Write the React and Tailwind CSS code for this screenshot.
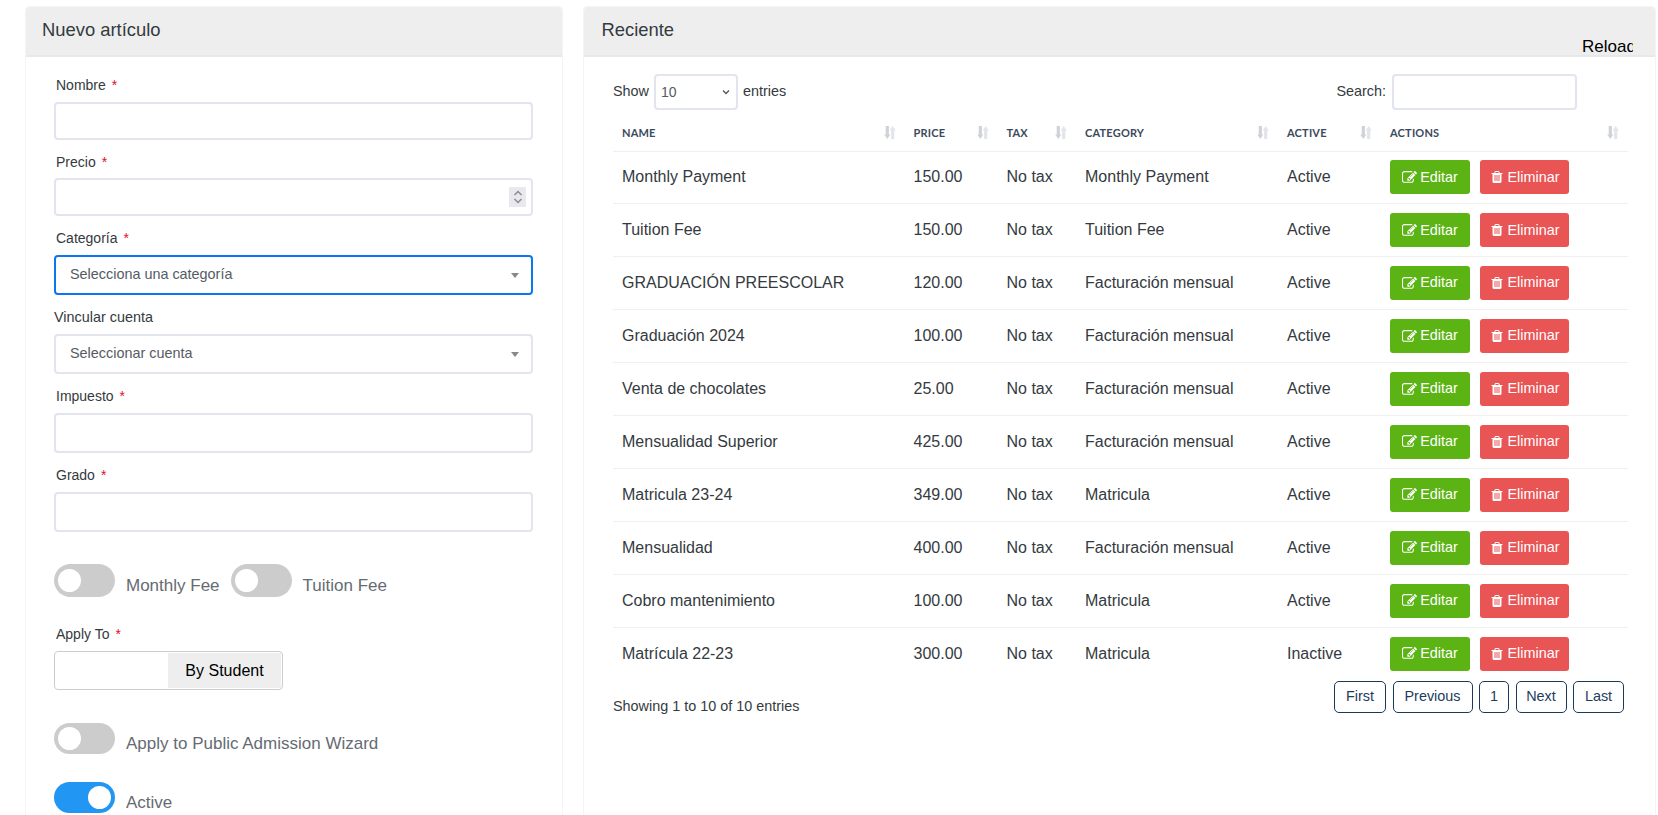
import React from "react";

const rows = [
  ["Monthly Payment", "150.00", "No tax", "Monthly Payment", "Active"],
  ["Tuition Fee", "150.00", "No tax", "Tuition Fee", "Active"],
  ["GRADUACIÓN PREESCOLAR", "120.00", "No tax", "Facturación mensual", "Active"],
  ["Graduación 2024", "100.00", "No tax", "Facturación mensual", "Active"],
  ["Venta de chocolates", "25.00", "No tax", "Facturación mensual", "Active"],
  ["Mensualidad Superior", "425.00", "No tax", "Facturación mensual", "Active"],
  ["Matricula 23-24", "349.00", "No tax", "Matricula", "Active"],
  ["Mensualidad", "400.00", "No tax", "Facturación mensual", "Active"],
  ["Cobro mantenimiento", "100.00", "No tax", "Matricula", "Active"],
  ["Matrícula 22-23", "300.00", "No tax", "Matricula", "Inactive"],
];

const headers = [
  ["NAME", "w-[291.5px]"],
  ["PRICE", "w-[93px]"],
  ["TAX", "w-[78.5px]"],
  ["CATEGORY", "w-[202px]"],
  ["ACTIVE", "w-[103px]"],
  ["ACTIONS", ""],
];

function EditIcon() {
  return (
    <svg width="15" height="15" viewBox="0 0 1792 1792" fill="currentColor" className="shrink-0">
      <path d="M888 1184l116-116-152-152-116 116v56h96v96h56zm440-720q-16-16-33 1l-350 350q-17 17-1 33t33-1l350-350q17-17 1-33zm80 594v190q0 119-84.5 203.5t-203.5 84.5h-832q-119 0-203.5-84.5t-84.5-203.5v-832q0-119 84.5-203.5t203.5-84.5h832q63 0 117 25 15 7 18 23 3 17-9 29l-49 49q-14 14-32 8-23-6-45-6h-832q-66 0-113 47t-47 113v832q0 66 47 113t113 47h832q66 0 113-47t47-113v-126q0-13 9-22l64-64q15-15 35-7t20 29zm-96-738l288 288-672 672h-288v-288zm444 132l-92 92-288-288 92-92q28-28 68-28t68 28l152 152q28 28 28 68t-28 68z" />
    </svg>
  );
}

function TrashIcon() {
  return (
    <svg width="14" height="14" viewBox="0 0 1792 1792" fill="currentColor" className="shrink-0">
      <path d="M704 1376v-704q0-14-9-23t-23-9h-64q-14 0-23 9t-9 23v704q0 14 9 23t23 9h64q14 0 23-9t9-23zm256 0v-704q0-14-9-23t-23-9h-64q-14 0-23 9t-9 23v704q0 14 9 23t23 9h64q14 0 23-9t9-23zm256 0v-704q0-14-9-23t-23-9h-64q-14 0-23 9t-9 23v704q0 14 9 23t23 9h64q14 0 23-9t9-23zm-544-992h448l-48-117q-7-9-17-11h-317q-10 2-17 11zm928 32v64q0 14-9 23t-23 9h-96v948q0 83-47 143.5t-113 60.5h-832q-66 0-113-58.5t-47-141.5v-952h-96q-14 0-23-9t-9-23v-64q0-14 9-23t23-9h309l70-167q15-37 54-63t79-26h320q40 0 79 26t54 63l70 167h309q14 0 23 9t9 23z" />
    </svg>
  );
}

function Label({ text, req = true, className = "ml-[2px] text-[14px]" }) {
  return (
    <label className={`block h-5 leading-5 text-[#343a40] ${className}`}>
      {text}
      {req && <span className="ml-[6px] text-[#e0102b]">*</span>}
    </label>
  );
}

function Input({ className = "", children }) {
  return (
    <div className={`relative w-full rounded-[4px] border-2 border-[#e2e5f0] bg-white ${className}`}>{children}</div>
  );
}

function Select2({ text }) {
  return (
    <div className="flex h-full items-center justify-between rounded-[4px] pl-[14px] pr-[12px] text-[14.4px] text-[#555b63]">
      <span>{text}</span>
      <span className="h-0 w-0 border-x-[4px] border-t-[5px] border-x-transparent border-t-[#888888]" />
    </div>
  );
}

function Toggle({ on, h = "h-[32px]" }) {
  return (
    <span className={`flex w-[61px] shrink-0 items-center rounded-full px-[4px] ${h} ${on ? "justify-end bg-[#2196f3]" : "bg-[#cccccc]"}`}>
      <span className="h-[23px] w-[23px] rounded-full bg-white" />
    </span>
  );
}

function SortIcon() {
  return (
    <svg width="12" height="13" viewBox="0 0 12 13" className="shrink-0">
      <path d="M1.7 0h3.2v8.5h1.5L3.3 13 .2 8.5h1.5z" fill="#cfd3d8" />
      <path d="M7.1 13h3.2V4.5h1.5L8.7 0 5.6 4.5h1.5z" fill="#e2e5e9" />
    </svg>
  );
}

function PageBtn({ children, className = "" }) {
  return (
    <span className={`flex h-8 items-center justify-center rounded-[5px] border border-[#1b3a57] text-[14.4px] text-[#1c3c5c] ${className}`}>
      {children}
    </span>
  );
}

export default function App() {
  return (
    <div
      className="flex h-[815px] items-start gap-[20px] overflow-hidden bg-white pl-[25px] pt-[6px]"
      style={{ fontFamily: '"Liberation Sans", Arial, sans-serif' }}
    >
      {/* Left card */}
      <div className="h-[900px] w-[538px] shrink-0 rounded-t-[4px] border border-[#f4f4f4] bg-white">
        <div className="flex h-[50px] items-center rounded-t-[4px] border-b-2 border-[#e8e8e8] bg-[#eeeeee] pb-[2px] pl-[16px] text-[18.4px] text-[#343a40]">
          Nuevo artículo
        </div>
        <form className="pl-[28px] pr-[29px] pt-[18px]">
          <Label text="Nombre" />
          <Input className="mt-[7px] h-[38px]" />
          <Label text="Precio" className="ml-[2px] mt-[12px] text-[14px]" />
          <Input className="mt-[6px] h-[38px]">
            <span className="absolute right-[5px] top-[7px] flex h-[20px] w-[17px] flex-col items-center justify-center bg-[#e8e8ee]">
              <svg width="10" height="16" viewBox="0 0 10 16" fill="none" stroke="#8a8d91" strokeWidth="1.5">
                <path d="M1.5 6 5 2.5 8.5 6" />
                <path d="M1.5 10 5 13.5 8.5 10" />
              </svg>
            </span>
          </Input>
          <Label text="Categoría" className="ml-[2px] mt-[12px] text-[14px]" />
          <div className="mt-[7px] h-[40px] rounded-[4px] border-2 border-[#0b76ef]">
            <Select2 text="Selecciona una categoría" />
          </div>
          <Label text="Vincular cuenta" req={false} className="mt-[12px] text-[14.4px]" />
          <Input className="mt-[7px] h-[40px]">
            <Select2 text="Seleccionar cuenta" />
          </Input>
          <Label text="Impuesto" className="ml-[2px] mt-[12px] text-[14px]" />
          <Input className="mt-[7px] h-[40px]" />
          <Label text="Grado" className="ml-[2px] mt-[12px] text-[14px]" />
          <Input className="mt-[7px] h-[40px]" />

          <div className="mt-[32px] flex items-start">
            <Toggle h="h-[33px]" />
            <span className="ml-[11px] mt-[12px] text-[17px] leading-5 text-[#666b72]">Monthly Fee</span>
            <span className="ml-[11px]"><Toggle h="h-[33px]" /></span>
            <span className="ml-[11px] mt-[12px] text-[17px] leading-5 text-[#666b72]">Tuition Fee</span>
          </div>

          <Label text="Apply To" className="ml-[2px] mt-[27px] text-[14px]" />
          <div className="mt-[7px] flex h-[39px] w-[229px] justify-end rounded-[4px] border border-[#cccccc] p-[1px]">
            <span className="flex h-full w-[113px] items-center justify-center bg-[#eeeeee] text-[16px] text-black">By Student</span>
          </div>

          <div className="mt-[33px] flex items-start">
            <Toggle h="h-[31px]" />
            <span className="ml-[11px] mt-[11px] text-[17px] leading-5 text-[#666b72]">Apply to Public Admission Wizard</span>
          </div>
          <div className="mt-[28px] flex items-start">
            <Toggle on h="h-[31px]" />
            <span className="ml-[11px] mt-[11px] text-[17px] leading-5 text-[#666b72]">Active</span>
          </div>
        </form>
      </div>

      {/* Right card */}
      <div className="relative h-[900px] w-[1073px] shrink-0 rounded-t-[4px] border border-[#f4f4f4] bg-white">
        <div className="flex h-[50px] items-center rounded-t-[4px] border-b-2 border-[#e8e8e8] bg-[#eeeeee] pb-[2px] pl-[17.5px] text-[18.4px] text-[#343a40]">
          Reciente
        </div>
        <span className="absolute left-[998px] top-[30px] w-[51px] overflow-hidden whitespace-nowrap text-[17px] leading-5 text-black">
          Reload
        </span>

        <div className="pl-[29px] pr-[27px] pt-[17px]">
          <div className="flex h-[36px] items-center justify-between text-[14.4px] text-[#343a40]">
            <div className="flex items-center">
              Show
              <span className="mx-[5px] flex h-[36px] w-[84px] items-center justify-between rounded-[4px] border-2 border-[#e2e5f0] pl-[5px] pr-[5px] text-[14px] text-[#555b63]">
                10
                <svg width="10" height="10" viewBox="0 0 10 10" fill="none" stroke="#555" strokeWidth="1.3"><path d="M2 3.5 5 6.5 8 3.5" /></svg>
              </span>
              entries
            </div>
            <div className="mr-[51px] flex items-center">
              Search:
              <span className="ml-[6px] h-[36px] w-[185px] rounded-[4px] border-2 border-[#e2e5f0]" />
            </div>
          </div>

          <table className="mt-[5px] w-full table-fixed border-collapse">
            <thead>
              <tr className="h-[36px] border-b border-[#f0f0f0]">
                {headers.map(([h, w]) => (
                  <th key={h} className={`${w} pl-[9px] pr-[9px] text-left font-normal`}>
                    <div className="flex items-center justify-between text-[11px] font-bold tracking-[0.2px] text-[#3b4a5c]" style={{ fontFamily: 'Lato, sans-serif' }}>
                      {h}
                      <SortIcon />
                    </div>
                  </th>
                ))}
              </tr>
            </thead>
            <tbody>
              {rows.map((r, i) => (
                <tr key={i} className="h-[52.9px] border-b border-[#f0f0f0] text-[16px] text-[#343a40] last:border-b-0">
                  {r.map((c, j) => (
                    <td key={j} className="whitespace-nowrap pl-[9px]">{c}</td>
                  ))}
                  <td className="pl-[9px]">
                    <div className="flex gap-[10px] text-[14.4px] text-white">
                      <span className="flex h-[34px] w-[80px] items-center justify-center gap-[3px] rounded-[3px] bg-[#5cb314]">
                        <EditIcon />Editar
                      </span>
                      <span className="flex h-[34px] w-[89px] items-center justify-center gap-[4px] rounded-[3px] bg-[#e95455]">
                        <TrashIcon />Eliminar
                      </span>
                    </div>
                  </td>
                </tr>
              ))}
            </tbody>
          </table>

          <div className="flex items-start justify-between pr-[4px]">
            <span className="mt-[16px] text-[14.4px] text-[#343a40]">Showing 1 to 10 of 10 entries</span>
            <div className="mt-[1px] flex gap-[6.5px]">
              <PageBtn className="w-[52px]">First</PageBtn>
              <PageBtn className="w-[80px]">Previous</PageBtn>
              <PageBtn className="w-[30px]">1</PageBtn>
              <PageBtn className="w-[51px]">Next</PageBtn>
              <PageBtn className="w-[51px]">Last</PageBtn>
            </div>
          </div>
        </div>
      </div>
    </div>
  );
}
